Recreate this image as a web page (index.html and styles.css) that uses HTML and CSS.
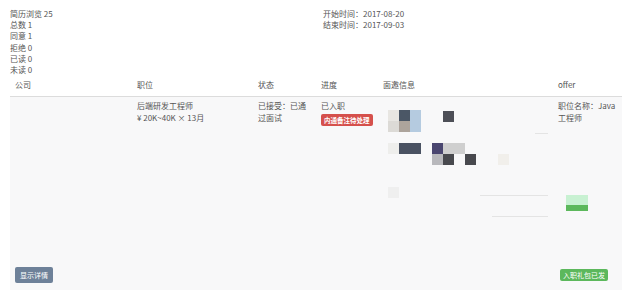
FILE: index.html
```html
<!DOCTYPE html>
<html lang="zh">
<head>
<meta charset="utf-8">
<link rel="stylesheet" href="styles.css">
</head>
<body>
<div class="page">
  <div class="summary">
    <div class="stats">
      <div>简历浏览 25</div>
      <div>总数 1</div>
      <div>同意 1</div>
      <div>拒绝 0</div>
      <div>已读 0</div>
      <div>未读 0</div>
    </div>
    <div class="dates">
      <div>开始时间：2017-08-20</div>
      <div>结束时间：2017-09-03</div>
    </div>
  </div>
  <div class="table">
    <div class="thead">
      <div class="cell">公司</div>
      <div class="cell">职位</div>
      <div class="cell">状态</div>
      <div class="cell">进度</div>
      <div class="cell">面邀信息</div>
      <div class="cell">offer</div>
    </div>
    <div class="trow">
      <div class="cell col-flex">
        <span class="btn btn-gray">显示详情</span>
      </div>
      <div class="cell">
        <div>后端研发工程师</div>
        <div>¥&nbsp;20K~40K × 13月</div>
      </div>
      <div class="cell status">已接受：已通过面试</div>
      <div class="cell">
        <div>已入职</div>
        <span class="badge">内通备注待处理</span>
      </div>
      <div class="cell mosaic">
        <span class="px" style="left:10px;top:13px;background:#e8e6e2"></span>
        <span class="px" style="left:21px;top:13px;background:#4b5766"></span>
        <span class="px" style="left:32px;top:13px;background:#b5cbe0"></span>
        <span class="px" style="left:65px;top:14px;background:#4d4f57"></span>
        <span class="px" style="left:10px;top:24px;background:#dcdad6"></span>
        <span class="px" style="left:21px;top:24px;background:#ada49c"></span>
        <span class="px" style="left:32px;top:24px;background:#b5cbe0"></span>
        <span class="px" style="left:10px;top:46px;background:#eeeeec"></span>
        <span class="px wide" style="left:21px;top:46px;background:#4a5262"></span>
        <span class="px" style="left:54px;top:46px;background:#4a4670"></span>
        <span class="px wide" style="left:65px;top:46px;background:#cfcfcf"></span>
        <span class="px" style="left:54px;top:57px;background:#b8b8bc"></span>
        <span class="px" style="left:65px;top:57px;background:#48494e"></span>
        <span class="px" style="left:87px;top:57px;background:#48494e"></span>
        <span class="px" style="left:120px;top:57px;background:#f1efeb"></span>
        <span class="px" style="left:10px;top:90px;background:#efefef"></span>
        <span class="hline" style="left:157px;top:36px;width:13px"></span>
        <span class="hline" style="left:102px;top:98px;width:68px"></span>
        <span class="hline" style="left:114px;top:119px;width:56px"></span>
      </div>
      <div class="cell col-flex">
        <div>职位名称：Java工程师</div>
        <span class="gift"></span>
        <span class="btn btn-green">入职礼包已发</span>
      </div>
    </div>
  </div>
</div>
</body>
</html>
```
FILE: styles.css
```css
* { box-sizing: border-box; }
html, body { margin: 0; padding: 0; background: #fff; }
body {
  font-family: "Noto Sans CJK SC", "Noto Sans", sans-serif;
  font-size: 8px;
  line-height: 11.2px;
  color: #555;
  overflow: hidden;
}
.page { padding: 8px 18px 0 10px; }
.summary {
  display: grid;
  grid-template-columns: 313px 1fr;
}
.table { display: flex; flex-direction: column; }
.thead, .trow {
  display: grid;
  grid-template-columns: 122px 121px 63px 62px 175px 69px;
}
.thead { border-bottom: 1px solid #dcdcdc; }
.thead .cell { padding: 4px 5px 6px; }
.trow {
  background: #f8f8f9;
  height: 200px;
}
.trow .cell { padding: 3px 5px 14px; line-height: 11.5px; }
.col-flex { display: flex; flex-direction: column; align-items: flex-start; }
.status { word-break: break-all; padding-right: 4px; }
.badge {
  display: inline-block;
  margin-top: 2px;
  background: #d5504c;
  color: #fff;
  font-size: 6.5px;
  line-height: 12px;
  padding: 0 3px;
  border-radius: 2px;
  font-weight: bold;
  white-space: nowrap;
}
.mosaic { position: relative; }
.px {
  position: absolute;
  width: 11px;
  height: 11px;
}
.px.wide { width: 22px; }
.hline {
  position: absolute;
  height: 1px;
  background: #e4e4e4;
}
.gift {
  display: flex;
  flex-direction: column;
  width: 22px;
  height: 17px;
  margin: 72px 0 0 8px;
  background: linear-gradient(#c8f1d2 0 60%, #5cb85c 60% 94%, transparent 94%);
}
.btn {
  display: inline-block;
  margin-top: auto;
  color: #fff;
  border-radius: 2px;
  white-space: nowrap;
}
.btn-gray {
  background: #6e8199;
  font-size: 7px;
  line-height: 16px;
  padding: 0 5px;
}
.btn-green {
  background: #5cb85c;
  font-size: 7px;
  line-height: 12px;
  padding: 0 3px;
  margin-left: 2px;
  margin-bottom: 2px;
}
```
